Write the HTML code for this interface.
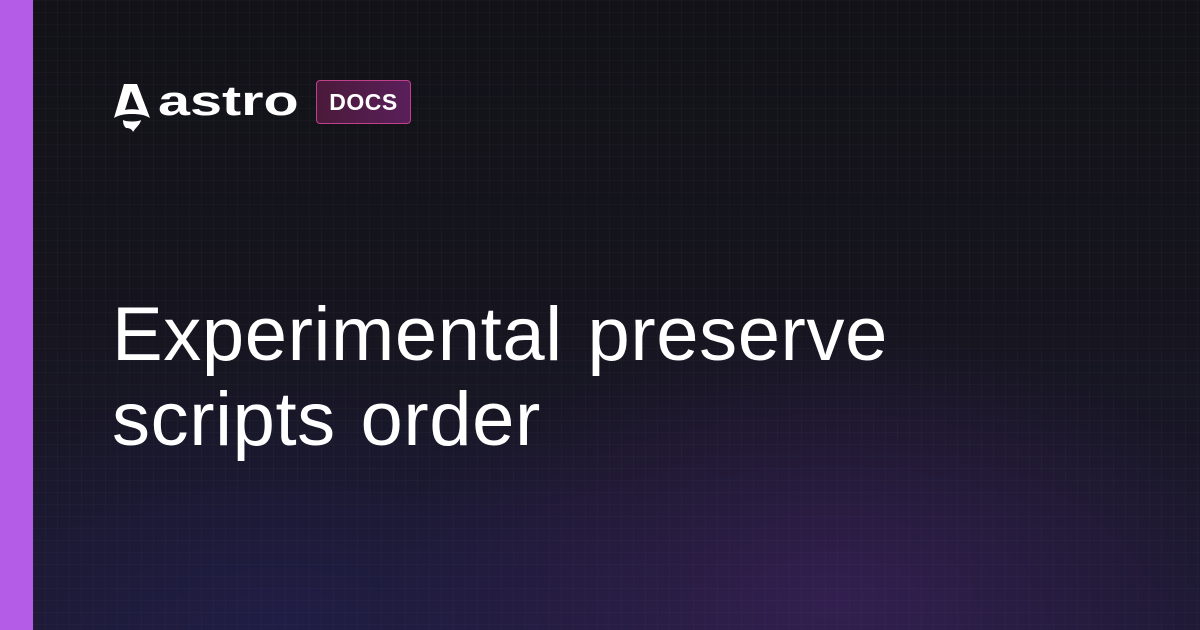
<!DOCTYPE html>
<html><head><style>
html,body{margin:0;padding:0}
body{width:1200px;height:630px;overflow:hidden;position:relative;background:#14131c;font-family:"Liberation Sans",sans-serif}
.bar{position:absolute;left:0;top:0;width:33px;height:630px;background:#b45be8}
.bg{position:absolute;left:33px;top:0;right:0;bottom:0;
background:
radial-gradient(ellipse 650px 380px at 800px 600px, rgba(100,45,150,0.32), transparent 70%),
radial-gradient(ellipse 600px 350px at 250px 620px, rgba(45,40,120,0.3), transparent 70%),
linear-gradient(180deg,#121218 0%,#15141d 45%,#1b1930 100%);}
.grid{position:absolute;left:33px;top:0;right:0;bottom:0;
background-image:linear-gradient(rgba(255,255,255,0.02) 1px,transparent 1px),linear-gradient(90deg,rgba(255,255,255,0.02) 1px,transparent 1px);background-size:12px 12px}
.logo{position:absolute;left:112px;top:84px}
.word{position:absolute;left:158px;top:78px;color:#fff;font-weight:bold;font-size:42px;letter-spacing:0px;line-height:46px;transform:scaleX(1.37);transform-origin:left top}
.docs{position:absolute;left:316px;top:80px;width:95px;height:44px;box-sizing:border-box;border:1.5px solid #c0408a;border-radius:4px;background:linear-gradient(90deg,#4a1a3a,#5a1f5a);color:#fff;font-weight:bold;font-size:23px;line-height:42px;text-align:center;letter-spacing:0.5px}
h1{position:absolute;left:112px;top:292px;margin:0;color:#fff;font-weight:normal;font-size:76px;line-height:85px;letter-spacing:0.6px;word-spacing:3px}
</style></head><body>
<div class="bar"></div><div class="bg"></div><div class="grid"></div>
<svg class="logo" width="40" height="48" viewBox="0 0 40 48">
<path d="M12 0 H25 L38 34 C33 31 28 30 20 30 C12 30 7 31 2 34 Z" fill="#fff"/>
<path d="M19 7 L13 26 C16 25 24 25 27 26 Z" fill="#14131c"/>
<path d="M11 36 C14 38 26 38 29 36 C28 41 24 43 21 48 C20 45 17 44 14 44 C12 42 11 40 11 36 Z" fill="#fff"/>
</svg>
<div class="word">astro</div>
<div class="docs">DOCS</div>
<h1>Experimental preserve<br>scripts order</h1>
</body></html>
